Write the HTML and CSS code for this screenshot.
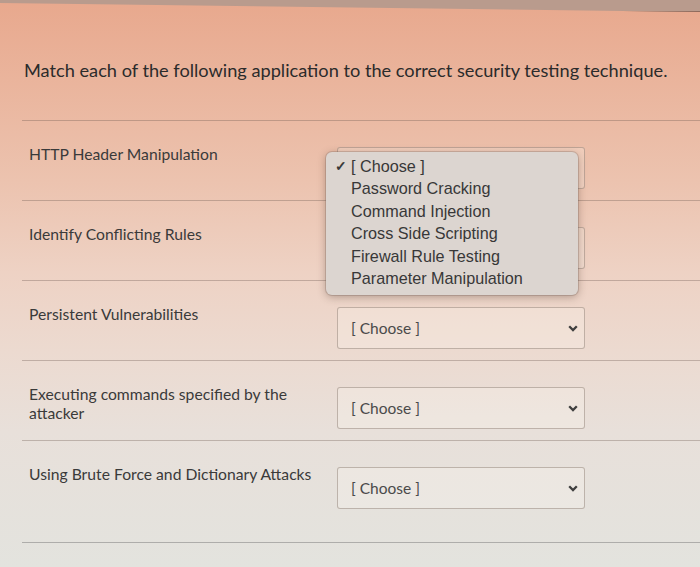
FILE: index.html
```html
<!DOCTYPE html>
<html lang="en">
<head>
<meta charset="utf-8">
<title>Matching question</title>
<link rel="stylesheet" href="styles.css">
</head>
<body>
<div class="frame-top"></div>
<main class="question">
  <p class="prompt">Match each of the following application to the correct security testing technique.</p>
  <div class="rows">
    <div class="row">
      <div class="label">HTTP Header Manipulation</div>
      <div class="select-wrap">
        <div class="select covered"><span class="value">[ Choose ]</span><svg class="chev" viewBox="0 0 10 7" width="10" height="7"><path d="M1.2 1.2 L5 5 L8.8 1.2" fill="none" stroke="#3f3f3f" stroke-width="2.3"/></svg></div>
        <ul class="menu">
          <li class="checked"><span class="tick">✓</span>[ Choose ]</li>
          <li>Password Cracking</li>
          <li>Command Injection</li>
          <li>Cross Side Scripting</li>
          <li>Firewall Rule Testing</li>
          <li>Parameter Manipulation</li>
        </ul>
      </div>
    </div>
    <div class="row">
      <div class="label">Identify Conflicting Rules</div>
      <div class="select-wrap">
        <div class="select covered"><span class="value">[ Choose ]</span><svg class="chev" viewBox="0 0 10 7" width="10" height="7"><path d="M1.2 1.2 L5 5 L8.8 1.2" fill="none" stroke="#3f3f3f" stroke-width="2.3"/></svg></div>
      </div>
    </div>
    <div class="row">
      <div class="label">Persistent Vulnerabilities</div>
      <div class="select-wrap">
        <div class="select"><span class="value">[ Choose ]</span><svg class="chev" viewBox="0 0 10 7" width="10" height="7"><path d="M1.2 1.2 L5 5 L8.8 1.2" fill="none" stroke="#3f3f3f" stroke-width="2.3"/></svg></div>
      </div>
    </div>
    <div class="row">
      <div class="label">Executing commands specified by the attacker</div>
      <div class="select-wrap">
        <div class="select"><span class="value">[ Choose ]</span><svg class="chev" viewBox="0 0 10 7" width="10" height="7"><path d="M1.2 1.2 L5 5 L8.8 1.2" fill="none" stroke="#3f3f3f" stroke-width="2.3"/></svg></div>
      </div>
    </div>
    <div class="row last">
      <div class="label">Using Brute Force and Dictionary Attacks</div>
      <div class="select-wrap">
        <div class="select"><span class="value">[ Choose ]</span><svg class="chev" viewBox="0 0 10 7" width="10" height="7"><path d="M1.2 1.2 L5 5 L8.8 1.2" fill="none" stroke="#3f3f3f" stroke-width="2.3"/></svg></div>
      </div>
    </div>
  </div>
</main>
</body>
</html>
```

FILE: styles.css
```css
html, body {
  margin: 0;
  padding: 0;
}
body {
  width: 700px;
  height: 567px;
  overflow: hidden;
  font-family: Lato, "Liberation Sans", sans-serif;
  color: #333;
  background: linear-gradient(180deg, #e8a88d 0%, #eab49c 14%, #ecc3af 32%, #eed2c4 48%, #ecdad0 62%, #e8e0da 76%, #e3e3de 100%);
}
.frame-top {
  height: 12px;
  background: #b99b8d;
  border-bottom: 1px solid #8e6a5c;
  box-sizing: border-box;
  clip-path: polygon(0 0, 100% 0, 100% 100%, 0 25%);
}
.question {
  padding: 0 0 0 22px;
}
.prompt {
  margin: 46px 0 0 2px;
  font-size: 18.2px;
  line-height: 24px;
  color: #2b2b2b;
}
.rows {
  margin-top: 38px;
}
.row {
  display: grid;
  grid-template-columns: 308px 248px;
  align-items: start;
  padding: 26px 0 11px 7px;
  border-top: 1px solid rgba(110, 90, 80, 0.35);
  height: 42px;
}
.row.last {
  padding-bottom: 33px;
  border-bottom: 1px solid rgba(110, 110, 110, 0.45);
}
.label {
  font-size: 15.7px;
  line-height: 19px;
  color: #3a3a3a;
  margin-top: -2px;
  padding-right: 6px;
}
.select-wrap {
  position: relative;
}
.select {
  height: 42px;
  box-sizing: border-box;
  border: 1px solid rgba(130, 115, 105, 0.45);
  border-radius: 3px;
  background: rgba(255, 250, 245, 0.25);
  display: flex;
  align-items: center;
  justify-content: space-between;
  padding: 0 6px 0 13px;
  font-size: 15.5px;
  color: #4a4a4a;
}
.select.covered .value {
  visibility: hidden;
}
.chev {
  display: block;
}
.menu {
  position: absolute;
  left: -11px;
  top: 5px;
  width: 252px;
  margin: 0;
  padding: 3px 0 6px 0;
  list-style: none;
  background: #dcd5d0;
  border-radius: 6px;
  box-shadow: 0 2px 8px rgba(60, 40, 30, 0.35), 0 0 0 1px rgba(120, 100, 90, 0.25);
  font-family: "Liberation Sans", Arial, sans-serif;
  font-size: 16.2px;
  line-height: 22.4px;
  color: #383838;
  z-index: 5;
}
.menu li {
  padding-left: 25px;
  position: relative;
}
.tick {
  position: absolute;
  left: 9px;
  font-size: 14px;
  font-weight: bold;
  color: #3a3a3a;
}
```
